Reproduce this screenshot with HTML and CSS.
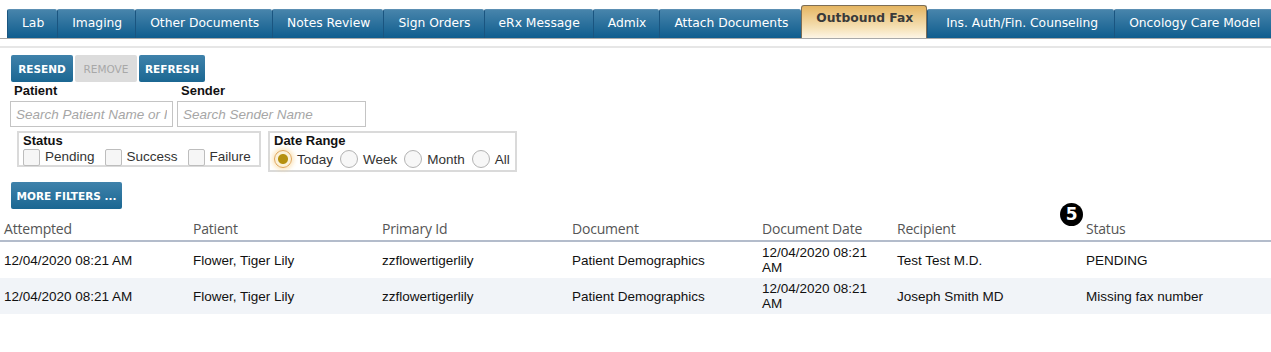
FILE: index.html
```html
<!DOCTYPE html>
<html>
<head>
    <title>Outbound Fax</title>
<link rel="stylesheet" href="styles.css">
</head>
<body>
    <div class="tabs">
        <div class="tab">Lab</div>
        <div class="tab">Imaging</div>
        <div class="tab">Other Documents</div>
        <div class="tab">Notes Review</div>
        <div class="tab">Sign Orders</div>
        <div class="tab">eRx Message</div>
        <div class="tab">Admix</div>
        <div class="tab">Attach Documents</div>
        <div class="tab active">Outbound Fax</div>
        <div class="tab wide">Ins. Auth/Fin. Counseling</div>
        <div class="tab">Oncology Care Model</div>
    </div>
    <div class="divider"></div>

    <div class="toolbar">
        <button class="btn">RESEND</button>
        <button class="btn disabled">REMOVE</button>
        <button class="btn">REFRESH</button>
    </div>

    <div class="search-row">
        <div class="field">
            <label>Patient</label>
            <input type="text" class="patient-input" placeholder="Search Patient Name or ID">
        </div>
        <div class="field">
            <label>Sender</label>
            <input type="text" class="sender-input" placeholder="Search Sender Name">
        </div>
    </div>

    <div class="filter-row">
        <div class="filter-box status-box">
            <div class="filter-title">Status</div>
            <div class="options">
                <span class="check"></span><span class="opt">Pending</span>
                <span class="check"></span><span class="opt">Success</span>
                <span class="check"></span><span class="opt">Failure</span>
            </div>
        </div>
        <div class="filter-box date-box">
            <div class="filter-title">Date Range</div>
            <div class="options">
                <span class="radio checked"></span><span class="opt">Today</span>
                <span class="radio"></span><span class="opt">Week</span>
                <span class="radio"></span><span class="opt">Month</span>
                <span class="radio"></span><span class="opt">All</span>
            </div>
        </div>
    </div>

    <div class="more">
        <button class="btn">MORE FILTERS ...</button>
    </div>

    <table class="fax-table">
        <colgroup>
            <col style="width:189px">
            <col style="width:189px">
            <col style="width:190px">
            <col style="width:190px">
            <col style="width:135px">
            <col style="width:189px">
            <col>
        </colgroup>
        <thead>
            <tr>
                <th>Attempted</th>
                <th>Patient</th>
                <th>Primary Id</th>
                <th>Document</th>
                <th>Document Date</th>
                <th>Recipient</th>
                <th class="status-head">Status<span class="badge">5</span></th>
            </tr>
        </thead>
        <tbody>
            <tr>
                <td>12/04/2020 08:21 AM</td>
                <td>Flower, Tiger Lily</td>
                <td>zzflowertigerlily</td>
                <td>Patient Demographics</td>
                <td>12/04/2020 08:21 AM</td>
                <td>Test Test M.D.</td>
                <td>PENDING</td>
            </tr>
            <tr class="alt">
                <td>12/04/2020 08:21 AM</td>
                <td>Flower, Tiger Lily</td>
                <td>zzflowertigerlily</td>
                <td>Patient Demographics</td>
                <td>12/04/2020 08:21 AM</td>
                <td>Joseph Smith MD</td>
                <td>Missing fax number</td>
            </tr>
        </tbody>
    </table>
</body>
</html>
```

FILE: styles.css
```css
/* Global Styles */
body {
    font-family: "Liberation Sans", Arial, sans-serif;
    background-color: #fff;
    margin: 0;
    padding: 0;
    color: #111;
    overflow: hidden;
}

/* Tab strip */
.tabs {
    display: flex;
    align-items: flex-end;
    height: 38px;
    padding-left: 7px;
    border-bottom: 1px solid #a9a9a9;
    white-space: nowrap;
    overflow: hidden;
}

.tab {
    flex: none;
    height: 28px;
    line-height: 27px;
    padding: 0 13px 0 14px;
    font-family: "DejaVu Sans", Verdana, sans-serif;
    font-size: 12.3px;
    color: #fff;
    background: linear-gradient(#4784ab, #0f5d8e);
    border-left: 1px solid #1a5580;
    border-top: 1px solid #5b8fb3;
    border-radius: 2px 2px 0 0;
}

.tab.wide {
    padding: 0 16px 0 18px;
}

.tab.active {
    height: 32px;
    line-height: 24px;
    font-weight: bold;
    color: #3a3a3a;
    background: linear-gradient(#e5b561, #f6e2b8 70%, #fdf5e6);
    border: 1px solid #7d6e55;
    border-bottom: none;
    border-radius: 3px 3px 0 0;
}

.divider {
    height: 2px;
    margin-top: 7px;
    background-color: #e6e6e6;
}

/* Buttons */
.btn {
    font-family: "DejaVu Sans", Verdana, sans-serif;
    font-size: 10.5px;
    font-weight: bold;
    color: #fff;
    background: linear-gradient(#3f82ab, #1b6792);
    border: none;
    border-radius: 2px;
    padding: 0 7px;
    height: 27px;
    cursor: pointer;
}

.btn.disabled {
    background: #dcdcdc;
    color: #a8a8a8;
    font-weight: normal;
}

.toolbar {
    display: flex;
    gap: 2px;
    padding: 7px 0 0 11px;
}

.toolbar .btn {
    width: 62px;
    padding: 0;
}

.toolbar .btn:last-child {
    width: 66px;
}

/* Search fields */
.search-row {
    display: flex;
    gap: 4px;
    padding-left: 10px;
    margin-top: 1px;
}

.field label {
    display: block;
    font-size: 13px;
    font-weight: bold;
    padding-left: 4px;
    height: 18px;
    line-height: 16px;
}

.field input {
    box-sizing: border-box;
    height: 26px;
    border: 1px solid #c4c4c4;
    padding: 0 5px;
    font-family: "Liberation Sans", Arial, sans-serif;
    font-size: 13.5px;
    color: #333;
}

.field input::placeholder {
    font-style: italic;
    color: #a6a6a6;
}

.patient-input {
    width: 163px;
}

.sender-input {
    width: 189px;
}

/* Status / date filters */
.filter-row {
    display: flex;
    align-items: flex-start;
    gap: 7px;
    padding-left: 17px;
    margin-top: 4px;
}

.filter-box {
    box-sizing: border-box;
    border: 2px solid #dadada;
    padding: 1px 6px 0 4px;
    font-size: 13.5px;
}

.status-box {
    width: 244px;
    height: 36px;
}

.date-box {
    width: 249px;
    height: 41px;
    padding-left: 4px;
}

.filter-title {
    font-size: 13px;
    font-weight: bold;
    line-height: 14px;
}

.options {
    display: flex;
    align-items: center;
    color: #333;
}

.status-box .options {
    margin-top: -1px;
}

.date-box .options {
    margin-top: 2px;
}

.check {
    flex: none;
    box-sizing: border-box;
    width: 17px;
    height: 17px;
    border: 1px solid #bdbdbd;
    border-radius: 2px;
    background: #f6f6f6;
    margin: 2px 5px 0 0;
}

.opt {
    flex: none;
}

.status-box .opt {
    margin-right: 10px;
}

.radio {
    flex: none;
    box-sizing: border-box;
    width: 18px;
    height: 18px;
    border: 1px solid #b3b3b3;
    border-radius: 50%;
    background: #f7f7f7;
    margin-right: 5px;
}

.radio.checked {
    border-color: #e0a55a;
    background: radial-gradient(circle, #b59010 0 4.5px, #fbf1d8 5.5px);
    box-shadow: 0 0 4px 2px rgba(250, 215, 150, 0.6);
}

.date-box .opt {
    margin-right: 7px;
}

.more {
    padding: 10px 0 0 11px;
}

.more .btn {
    width: 111px;
    padding: 0;
    height: 27px;
}

/* Results table */
.fax-table {
    width: 1271px;
    border-collapse: collapse;
    table-layout: fixed;
    margin-top: -2px;
}

.fax-table th {
    text-align: left;
    font-family: "Open Sans", "Noto Sans", sans-serif;
    font-weight: normal;
    font-size: 14px;
    color: #555;
    padding: 12px 4px 2px;
    border-bottom: 2px solid #b3bccb;
    letter-spacing: -0.2px;
}

.status-head {
    position: relative;
}

.badge {
    position: absolute;
    left: -22px;
    top: -4px;
    width: 23px;
    height: 23px;
    border-radius: 50%;
    background: #000;
    color: #fff;
    font-family: "DejaVu Sans", sans-serif;
    font-weight: bold;
    font-size: 17px;
    line-height: 23px;
    text-align: center;
}

.fax-table td {
    font-size: 13.5px;
    padding: 0 10px 0 4px;
    height: 36px;
    line-height: 15px;
    color: #111;
    vertical-align: middle;
}

.fax-table tr.alt td {
    background-color: #f1f4f8;
}
```
